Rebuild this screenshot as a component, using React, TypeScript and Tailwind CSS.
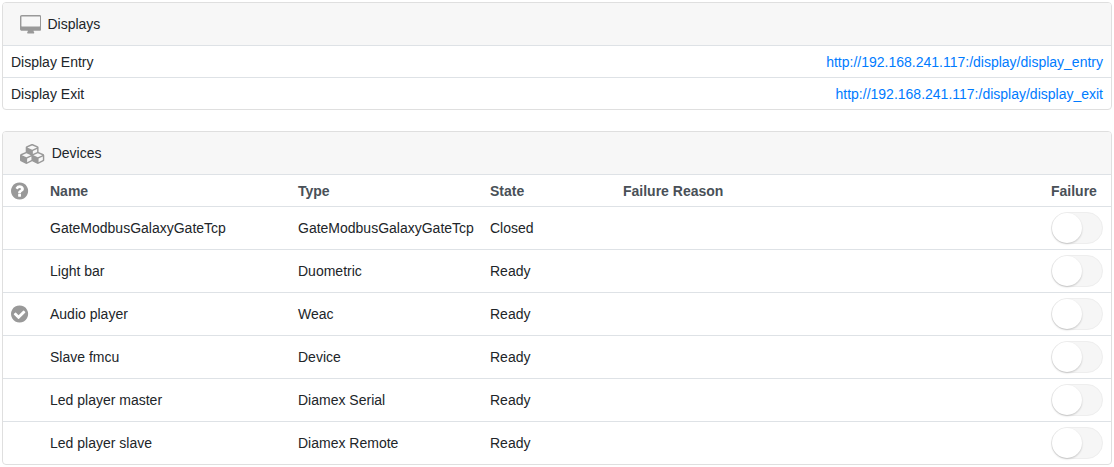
import { useState } from 'react';
import type { ReactNode } from 'react';

interface Display {
    name: string;
    url: string;
}

interface Device {
    name: string;
    type: string;
    state: string;
    failureReason?: string;
    checked?: boolean;
}

const displays: Display[] = [
    { name: 'Display Entry', url: 'http://192.168.241.117:/display/display_entry' },
    { name: 'Display Exit', url: 'http://192.168.241.117:/display/display_exit' }
];

const devices: Device[] = [
    { name: 'GateModbusGalaxyGateTcp', type: 'GateModbusGalaxyGateTcp', state: 'Closed' },
    { name: 'Light bar', type: 'Duometric', state: 'Ready' },
    { name: 'Audio player', type: 'Weac', state: 'Ready', checked: true },
    { name: 'Slave fmcu', type: 'Device', state: 'Ready' },
    { name: 'Led player master', type: 'Diamex Serial', state: 'Ready' },
    { name: 'Led player slave', type: 'Diamex Remote', state: 'Ready' }
];

function DesktopIcon() {
    return (
        <svg className="mt-0.5 h-5 w-auto text-[#999]" viewBox="-64 0 1920 1792" fill="currentColor" aria-hidden="true">
            <path d="M1728 992v-832q0-13-9.5-22.5t-22.5-9.5h-1600q-13 0-22.5 9.5t-9.5 22.5v832q0 13 9.5 22.5t22.5 9.5h1600q13 0 22.5-9.5t9.5-22.5zm128-832v1088q0 66-47 113t-113 47h-544q0 37 16 77.5t32 71 16 43.5q0 26-19 45t-45 19h-512q-26 0-45-19t-19-45q0-14 16-44t32-70 16-78h-544q-66 0-113-47t-47-113v-1088q0-66 47-113t113-47h1600q66 0 113 47t47 113z" />
        </svg>
    );
}

function CubesIcon() {
    return (
        <svg className="mt-0.5 h-5 w-auto text-[#999]" viewBox="0 0 2304 1792" fill="currentColor" aria-hidden="true">
            <path d="M640 1632l384-192v-314l-384 164v342zm-64-454l404-173-404-173-404 173zm1088 454l384-192v-314l-384 164v342zm-64-454l404-173-404-173-404 173zm-448-293l384-165v-266l-384 164v267zm-64-379l441-189-441-189-441 189zm1088 518v416q0 36-19 67t-52 47l-448 224q-25 14-57 14t-57-14l-448-224q-5-2-7-4-2 2-7 4l-448 224q-25 14-57 14t-57-14l-448-224q-33-16-52-47t-19-67v-416q0-38 21.5-70t56.5-48l434-186v-400q0-38 21.5-70t56.5-48l448-192q23-10 50-10t50 10l448 192q35 16 56.5 48t21.5 70v400l434 186q36 16 57 48t21 70z" />
        </svg>
    );
}

function QuestionIcon() {
    return (
        <svg className="size-5 text-[#999]" viewBox="128 0 1792 1792" fill="currentColor" aria-hidden="true">
            <path d="M1024 1376v-192q0-14-9-23t-23-9h-192q-14 0-23 9t-9 23v192q0 14 9 23t23 9h192q14 0 23-9t9-23zm256-672q0-88-55.5-163t-138.5-116-170-41q-243 0-371 213-15 24 8 42l132 100q7 6 19 6 16 0 25-12 53-68 86-92 34-24 86-24 48 0 85.5 26t37.5 59q0 38-20 61t-68 45q-63 28-115.5 86.5t-52.5 125.5v36q0 14 9 23t23 9h192q14 0 23-9t9-23q0-19 21.5-49.5t54.5-49.5q32-18 49-28.5t46-35 44.5-48 28-60.5 12.5-81zm384 192q0 209-103 385.5t-279.5 279.5-385.5 103-385.5-103-279.5-279.5-103-385.5 103-385.5 279.5-279.5 385.5-103 385.5 103 279.5 279.5 103 385.5z" />
        </svg>
    );
}

function CheckIcon() {
    return (
        <svg className="size-5 text-[#999]" viewBox="128 0 1792 1792" fill="currentColor" aria-hidden="true">
            <path d="M1412 734q0-28-18-46l-91-90q-19-19-45-19t-45 19l-408 407-226-226q-19-19-45-19t-45 19l-91 90q-18 18-18 46 0 27 18 45l362 362q19 19 45 19 27 0 46-19l543-543q18-18 18-45zm252 162q0 209-103 385.5t-279.5 279.5-385.5 103-385.5-103-279.5-279.5-103-385.5 103-385.5 279.5-279.5 385.5-103 385.5 103 279.5 279.5 103 385.5z" />
        </svg>
    );
}

interface CardProps {
    icon: ReactNode;
    title: string;
    children: ReactNode;
}

function Card({ icon, title, children }: CardProps) {
    return (
        <section className="overflow-hidden rounded border border-[#dfdfdf] bg-white">
            <div className="flex h-[42px] items-center gap-1.5 bg-[#f7f7f7] px-[17px]">
                {icon}
                <h2>{title}</h2>
            </div>
            {children}
        </section>
    );
}

function FailureSwitch({ name }: { name: string }) {
    const [on, setOn] = useState(false);

    return (
        <label className="relative block h-8 w-[52px] cursor-pointer">
            <input
                type="checkbox"
                role="switch"
                aria-label={`Failure ${name}`}
                checked={on}
                onChange={e => setOn(e.target.checked)}
                className="peer block h-8 w-[52px] cursor-pointer appearance-none rounded-full border border-[#eee] bg-[#f6f6f6] checked:border-[#007bff] checked:bg-[#007bff]"
            />
            <span className="pointer-events-none absolute top-px left-px size-[30px] rounded-full bg-white shadow-[0_1px_2px_rgba(0,0,0,0.2)] transition-transform peer-checked:translate-x-5"></span>
        </label>
    );
}

export default function App() {
    return (
        <main className="flex flex-col gap-[21px] p-0.5 font-['Liberation_Sans',Arial,sans-serif] text-sm text-[#212529]">
            <Card icon={<DesktopIcon />} title="Displays">
                <table className="w-full border-separate border-spacing-0">
                    <tbody>
                        {displays.map(display => (
                            <tr key={display.url}>
                                <td className="h-8 border-t border-[#dee2e6] px-2">{display.name}</td>
                                <td className="h-8 border-t border-[#dee2e6] px-2 text-right">
                                    <a href={display.url} className="text-[#007bff] hover:underline">
                                        {display.url}
                                    </a>
                                </td>
                            </tr>
                        ))}
                    </tbody>
                </table>
            </Card>

            <Card icon={<CubesIcon />} title="Devices">
                <table className="w-full table-fixed border-separate border-spacing-0">
                    <thead>
                        <tr className="h-8 text-left text-[#495057] *:border-t *:border-[#dee2e6]">
                            <th className="w-[39px] pl-2" aria-label="Status">
                                <QuestionIcon />
                            </th>
                            <th className="w-[248px] px-2">Name</th>
                            <th className="w-[192px] px-2">Type</th>
                            <th className="w-[133px] px-2">State</th>
                            <th className="px-2">Failure Reason</th>
                            <th className="w-[68px] px-2">Failure</th>
                        </tr>
                    </thead>
                    <tbody>
                        {devices.map(device => (
                            <tr key={device.name} className="h-[43px] *:border-t *:border-[#dee2e6]">
                                <td className="pl-2">{device.checked && <CheckIcon />}</td>
                                <td className="px-2">{device.name}</td>
                                <td className="px-2">{device.type}</td>
                                <td className="px-2">{device.state}</td>
                                <td className="px-2">{device.failureReason}</td>
                                <td className="px-2">
                                    <FailureSwitch name={device.name} />
                                </td>
                            </tr>
                        ))}
                    </tbody>
                </table>
            </Card>
        </main>
    );
}
